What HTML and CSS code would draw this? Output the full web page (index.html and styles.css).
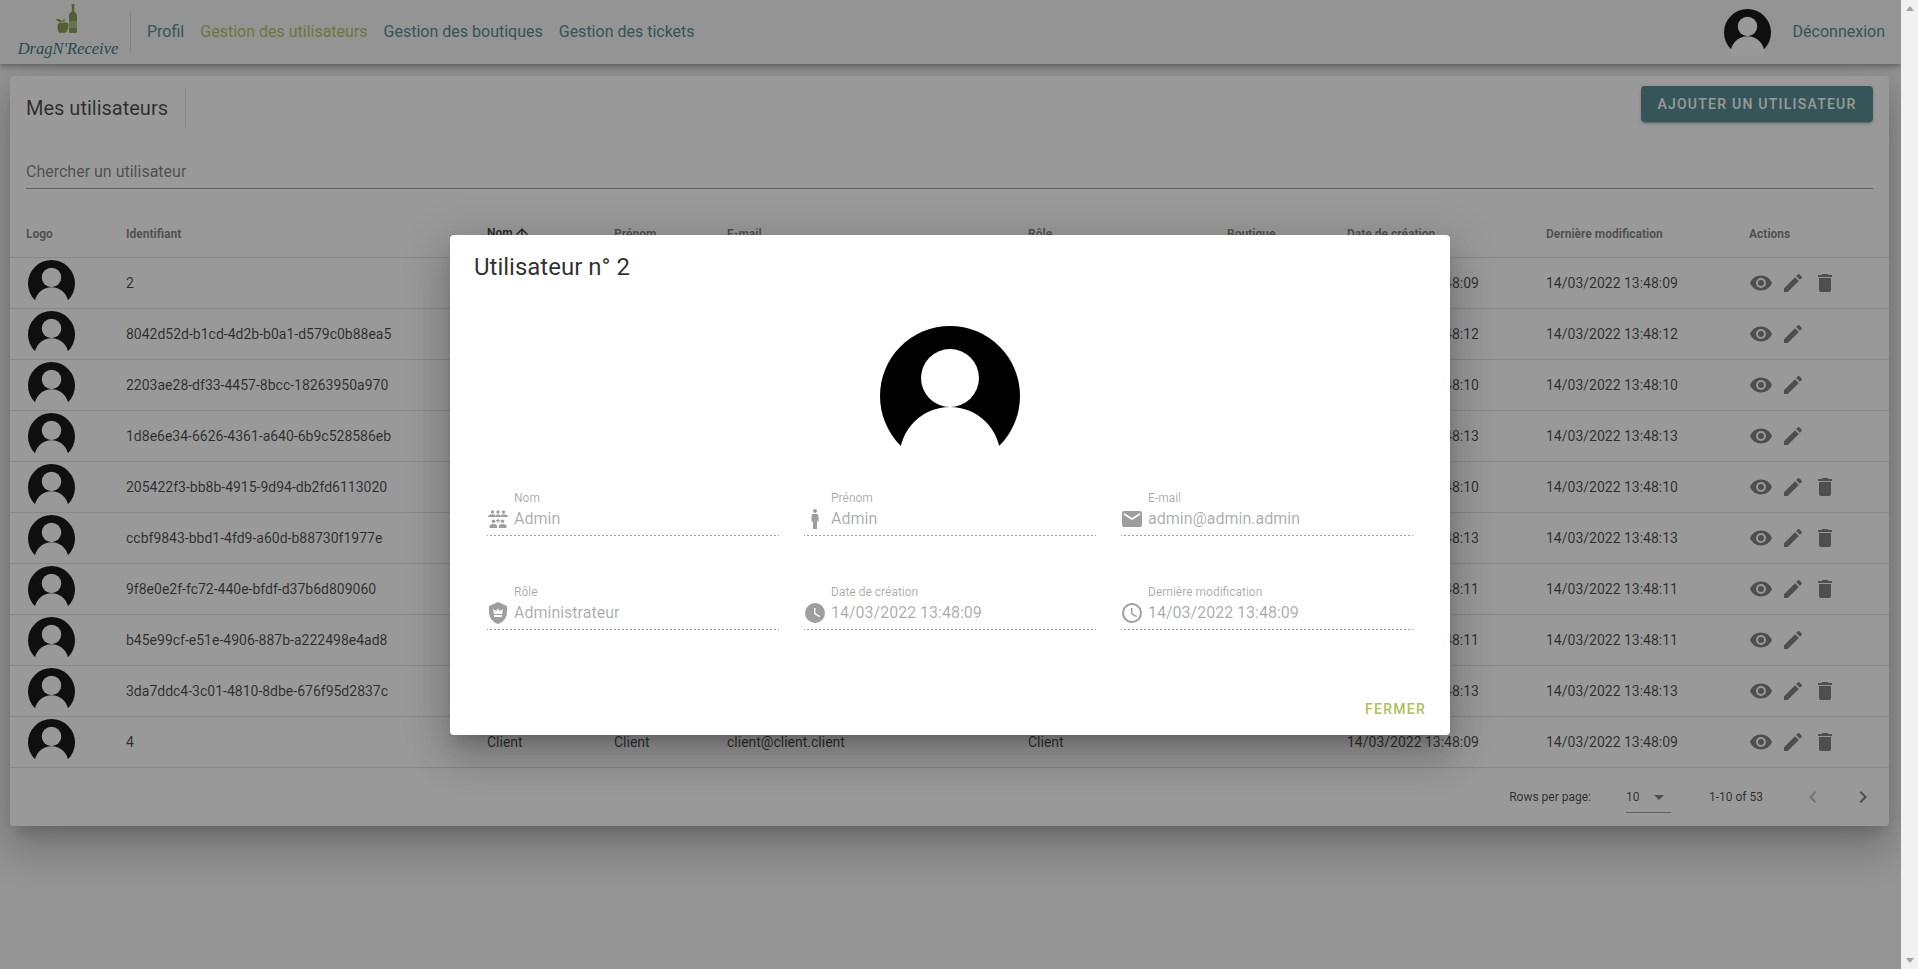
FILE: index.html
```html
<!DOCTYPE html>
<html lang="fr">
<head>
  <meta charset="UTF-8">
  <meta name="viewport" content="width=device-width, initial-scale=1.0">
  <title>DragN'Receive - Gestion des utilisateurs</title>
  <link rel="stylesheet" href="styles.css">
</head>
<body>

<!-- Icones -->
<svg class="sprites" xmlns="http://www.w3.org/2000/svg">
  <symbol id="i-avatar" viewBox="0 0 140 140">
    <circle cx="70" cy="70" r="70" fill="#000"/>
    <circle cx="70" cy="52" r="29" fill="#fff"/>
    <circle cx="70" cy="131.5" r="50.5" fill="#fff"/>
  </symbol>
  <symbol id="i-eye" viewBox="0 0 24 24"><path d="M12,9A3,3 0 0,0 9,12A3,3 0 0,0 12,15A3,3 0 0,0 15,12A3,3 0 0,0 12,9M12,17A5,5 0 0,1 7,12A5,5 0 0,1 12,7A5,5 0 0,1 17,12A5,5 0 0,1 12,17M12,4.5C7,4.5 2.73,7.61 1,12C2.73,16.39 7,19.5 12,19.5C17,19.5 21.27,16.39 23,12C21.27,7.61 17,4.5 12,4.5Z"/></symbol>
  <symbol id="i-pencil" viewBox="0 0 24 24"><path d="M20.71,7.04C21.1,6.65 21.1,6 20.71,5.63L18.37,3.29C18,2.9 17.35,2.9 16.96,3.29L15.12,5.12L18.87,8.87M3,17.25V21H6.75L17.81,9.93L14.06,6.18L3,17.25Z"/></symbol>
  <symbol id="i-delete" viewBox="0 0 24 24"><path d="M19,4H15.5L14.5,3H9.5L8.5,4H5V6H19M6,19A2,2 0 0,0 8,21H16A2,2 0 0,0 18,19V7H6V19Z"/></symbol>
  <symbol id="i-mail" viewBox="0 0 24 24"><path d="M20,8L12,13L4,8V6L12,11L20,6M20,4H4C2.89,4 2,4.89 2,6V18A2,2 0 0,0 4,20H20A2,2 0 0,0 22,18V6C22,4.89 21.1,4 20,4Z"/></symbol>
  <symbol id="i-clock" viewBox="0 0 24 24"><path d="M12,2A10,10 0 0,0 2,12A10,10 0 0,0 12,22A10,10 0 0,0 22,12A10,10 0 0,0 12,2M16.2,16.2L11,13V7H12.5V12.2L17,14.9L16.2,16.2Z"/></symbol>
  <symbol id="i-clock-outline" viewBox="0 0 24 24"><path d="M12,20A8,8 0 0,0 20,12A8,8 0 0,0 12,4A8,8 0 0,0 4,12A8,8 0 0,0 12,20M12,2A10,10 0 0,1 22,12A10,10 0 0,1 12,22C6.47,22 2,17.5 2,12A10,10 0 0,1 12,2M12.5,7V12.25L17,14.92L16.25,16.15L11,13V7H12.5Z"/></symbol>
  <symbol id="i-male" viewBox="0 0 24 24"><path d="M12,2A2,2 0 0,1 14,4A2,2 0 0,1 12,6A2,2 0 0,1 10,4A2,2 0 0,1 12,2M10.5,7H13.5A2,2 0 0,1 15.5,9V14.5H14V22H10V14.5H8.5V9A2,2 0 0,1 10.5,7Z"/></symbol>
  <symbol id="i-shield" viewBox="0 0 24 24"><path d="M12,1L3,5V11C3,16.55 6.84,21.74 12,23C17.16,21.74 21,16.55 21,11V5L12,1M16,16H8V14H16V16M16,13H8L7,8L10,10L12,7.5L14,10L17,8L16,13Z"/></symbol>
  <symbol id="i-crowd" viewBox="0 0 24 24">
    <circle cx="6.5" cy="5" r="1.7"/><circle cx="12" cy="5" r="1.7"/><circle cx="17.5" cy="5" r="1.7"/>
    <path d="M2,10C2,8 4,7.5 5.5,7.5H7.5C8.6,7.5 9.3,8 9.5,9C9.8,8 10.6,7.5 11.5,7.5H12.5C13.4,7.5 14.2,8 14.5,9C14.7,8 15.4,7.5 16.5,7.5H18.5C20,7.5 22,8 22,10Z"/>
    <circle cx="7.5" cy="14.2" r="1.8"/><circle cx="16.5" cy="14.2" r="1.8"/>
    <path d="M11.4,11.5H12.6V13H14V14.2H12.6V15.7H11.4V14.2H10V13H11.4Z"/>
    <path d="M3.5,21V19.5C3.5,17.8 5,17 7.5,17C10,17 11.2,17.8 11.2,19.5V21Z"/>
    <path d="M12.8,21V19.5C12.8,17.8 14,17 16.5,17C19,17 20.5,17.8 20.5,19.5V21Z"/>
  </symbol>
  <symbol id="i-sort" viewBox="0 0 24 24"><path d="M13,20H11V8L5.5,13.5L4.08,12.08L12,4.16L19.92,12.08L18.5,13.5L13,8V20Z"/></symbol>
  <symbol id="i-left" viewBox="0 0 24 24"><path d="M15.41,16.58L10.83,12L15.41,7.41L14,6L8,12L14,18L15.41,16.58Z"/></symbol>
  <symbol id="i-right" viewBox="0 0 24 24"><path d="M8.59,16.58L13.17,12L8.59,7.41L10,6L16,12L10,18L8.59,16.58Z"/></symbol>
  <symbol id="i-caret" viewBox="0 0 24 24"><path d="M7,10L12,15L17,10H7Z"/></symbol>
</svg>

<div class="window">
  <div class="stage">
    <div class="page">

      <!-- Barre du haut -->
      <header class="topbar">
        <a class="logo" href="#">
          <svg class="logo-mark" viewBox="0 0 21 29">
            <path d="M15.5,0H18.5V1.5H18.2V7.5C20,8.7 21,10 21,12V17H13V12C13,10 14,8.7 15.8,7.5V1.5H15.5Z"/>
            <path d="M13,23.5H21V27.5C21,28.4 20.4,29 19.5,29H14.5C13.6,29 13,28.4 13,27.5Z"/>
            <path class="logo-label" d="M13,17H21V23.5H13Z"/>
            <path d="M12.5,21C12.5,25.5 10.5,29 8,29C7.2,29 6.8,28.6 6.3,28.6C5.8,28.6 5.4,29 4.6,29C2.2,29 1.5,25 1.5,22.5C1.5,20 3,18.5 5,18.5C5.8,18.5 6,18.8 6.5,18.8C7.2,18.8 8.2,18.2 9.5,18.4C11.5,18.7 12.5,19.5 12.5,21Z"/>
            <path d="M0,15.5C1.5,14.5 4.5,14.5 6,17.8C3.5,18.5 1.2,17.5 0,15.5Z"/>
            <path d="M6,17.8C6.3,16.2 7.5,15 9.3,15.3C9,17 7.6,18 6,17.8Z"/>
          </svg>
          <span class="logo-text">DragN'Receive</span>
        </a>
        <span class="topbar-sep"></span>
        <nav class="nav">
          <a href="#">Profil</a>
          <a href="#" class="current">Gestion des utilisateurs</a>
          <a href="#">Gestion des boutiques</a>
          <a href="#">Gestion des tickets</a>
        </nav>
        <svg class="topbar-avatar"><use href="#i-avatar"/></svg>
        <a class="logout" href="#">Déconnexion</a>
      </header>

      <!-- Tableau des utilisateurs -->
      <main class="card">
        <div class="card-head">
          <h1>Mes utilisateurs</h1>
          <span class="card-sep"></span>
          <button class="btn-add">Ajouter un utilisateur</button>
        </div>

        <div class="search">
          <input type="text" placeholder="Chercher un utilisateur">
        </div>

        <table class="users">
          <colgroup>
            <col class="c-logo"><col class="c-id"><col class="c-nom"><col class="c-prenom"><col class="c-mail">
            <col class="c-role"><col class="c-shop"><col class="c-date"><col class="c-modif"><col class="c-act">
          </colgroup>
          <thead>
            <tr>
              <th>Logo</th>
              <th>Identifiant</th>
              <th class="sorted">Nom<svg class="sort-icon"><use href="#i-sort"/></svg></th>
              <th>Prénom</th>
              <th>E-mail</th>
              <th>Rôle</th>
              <th>Boutique</th>
              <th>Date de création</th>
              <th>Dernière modification</th>
              <th>Actions</th>
            </tr>
          </thead>
          <tbody>
            <tr>
              <td><svg class="row-avatar"><use href="#i-avatar"/></svg></td>
              <td>2</td><td></td><td></td><td></td><td></td><td></td>
              <td>14/03/2022 13:48:09</td><td>14/03/2022 13:48:09</td>
              <td class="actions"><svg><use href="#i-eye"/></svg><svg><use href="#i-pencil"/></svg><svg><use href="#i-delete"/></svg></td>
            </tr>
            <tr>
              <td><svg class="row-avatar"><use href="#i-avatar"/></svg></td>
              <td>8042d52d-b1cd-4d2b-b0a1-d579c0b88ea5</td><td></td><td></td><td></td><td></td><td></td>
              <td>14/03/2022 13:48:12</td><td>14/03/2022 13:48:12</td>
              <td class="actions"><svg><use href="#i-eye"/></svg><svg><use href="#i-pencil"/></svg></td>
            </tr>
            <tr>
              <td><svg class="row-avatar"><use href="#i-avatar"/></svg></td>
              <td>2203ae28-df33-4457-8bcc-18263950a970</td><td></td><td></td><td></td><td></td><td></td>
              <td>14/03/2022 13:48:10</td><td>14/03/2022 13:48:10</td>
              <td class="actions"><svg><use href="#i-eye"/></svg><svg><use href="#i-pencil"/></svg></td>
            </tr>
            <tr>
              <td><svg class="row-avatar"><use href="#i-avatar"/></svg></td>
              <td>1d8e6e34-6626-4361-a640-6b9c528586eb</td><td></td><td></td><td></td><td></td><td></td>
              <td>14/03/2022 13:48:13</td><td>14/03/2022 13:48:13</td>
              <td class="actions"><svg><use href="#i-eye"/></svg><svg><use href="#i-pencil"/></svg></td>
            </tr>
            <tr>
              <td><svg class="row-avatar"><use href="#i-avatar"/></svg></td>
              <td>205422f3-bb8b-4915-9d94-db2fd6113020</td><td></td><td></td><td></td><td></td><td></td>
              <td>14/03/2022 13:48:10</td><td>14/03/2022 13:48:10</td>
              <td class="actions"><svg><use href="#i-eye"/></svg><svg><use href="#i-pencil"/></svg><svg><use href="#i-delete"/></svg></td>
            </tr>
            <tr>
              <td><svg class="row-avatar"><use href="#i-avatar"/></svg></td>
              <td>ccbf9843-bbd1-4fd9-a60d-b88730f1977e</td><td></td><td></td><td></td><td></td><td></td>
              <td>14/03/2022 13:48:13</td><td>14/03/2022 13:48:13</td>
              <td class="actions"><svg><use href="#i-eye"/></svg><svg><use href="#i-pencil"/></svg><svg><use href="#i-delete"/></svg></td>
            </tr>
            <tr>
              <td><svg class="row-avatar"><use href="#i-avatar"/></svg></td>
              <td>9f8e0e2f-fc72-440e-bfdf-d37b6d809060</td><td></td><td></td><td></td><td></td><td></td>
              <td>14/03/2022 13:48:11</td><td>14/03/2022 13:48:11</td>
              <td class="actions"><svg><use href="#i-eye"/></svg><svg><use href="#i-pencil"/></svg><svg><use href="#i-delete"/></svg></td>
            </tr>
            <tr>
              <td><svg class="row-avatar"><use href="#i-avatar"/></svg></td>
              <td>b45e99cf-e51e-4906-887b-a222498e4ad8</td><td></td><td></td><td></td><td></td><td></td>
              <td>14/03/2022 13:48:11</td><td>14/03/2022 13:48:11</td>
              <td class="actions"><svg><use href="#i-eye"/></svg><svg><use href="#i-pencil"/></svg></td>
            </tr>
            <tr>
              <td><svg class="row-avatar"><use href="#i-avatar"/></svg></td>
              <td>3da7ddc4-3c01-4810-8dbe-676f95d2837c</td><td></td><td></td><td></td><td></td><td></td>
              <td>14/03/2022 13:48:13</td><td>14/03/2022 13:48:13</td>
              <td class="actions"><svg><use href="#i-eye"/></svg><svg><use href="#i-pencil"/></svg><svg><use href="#i-delete"/></svg></td>
            </tr>
            <tr>
              <td><svg class="row-avatar"><use href="#i-avatar"/></svg></td>
              <td>4</td><td>Client</td><td>Client</td><td>client@client.client</td><td>Client</td><td></td>
              <td>14/03/2022 13:48:09</td><td>14/03/2022 13:48:09</td>
              <td class="actions"><svg><use href="#i-eye"/></svg><svg><use href="#i-pencil"/></svg><svg><use href="#i-delete"/></svg></td>
            </tr>
          </tbody>
        </table>

        <div class="table-foot">
          <span class="rows-label">Rows per page:</span>
          <span class="rows-select">10<svg><use href="#i-caret"/></svg></span>
          <span class="rows-range">1-10 of 53</span>
          <svg class="page-btn off"><use href="#i-left"/></svg>
          <svg class="page-btn"><use href="#i-right"/></svg>
        </div>
      </main>
    </div>

    <!-- Fenetre de detail -->
    <div class="overlay"></div>
    <div class="dialog-wrap">
      <section class="dialog">
        <h2>Utilisateur n° 2</h2>
        <svg class="dialog-avatar"><use href="#i-avatar"/></svg>
        <div class="fields">
          <div class="field">
            <label>Nom</label>
            <div class="field-row"><svg><use href="#i-crowd"/></svg><span>Admin</span></div>
          </div>
          <div class="field">
            <label>Prénom</label>
            <div class="field-row"><svg><use href="#i-male"/></svg><span>Admin</span></div>
          </div>
          <div class="field">
            <label>E-mail</label>
            <div class="field-row"><svg><use href="#i-mail"/></svg><span>admin@admin.admin</span></div>
          </div>
          <div class="field">
            <label>Rôle</label>
            <div class="field-row"><svg><use href="#i-shield"/></svg><span>Administrateur</span></div>
          </div>
          <div class="field">
            <label>Date de création</label>
            <div class="field-row"><svg><use href="#i-clock"/></svg><span>14/03/2022 13:48:09</span></div>
          </div>
          <div class="field">
            <label>Dernière modification</label>
            <div class="field-row"><svg><use href="#i-clock-outline"/></svg><span>14/03/2022 13:48:09</span></div>
          </div>
        </div>
        <div class="dialog-actions">
          <button class="btn-close">Fermer</button>
        </div>
      </section>
    </div>
  </div>

  <!-- Barre de defilement -->
  <div class="scrollbar">
    <span class="arrow-up"></span>
    <span class="arrow-down"></span>
  </div>
</div>

</body>
</html>
```

FILE: styles.css
```css
* {
  box-sizing: border-box;
}

html, body {
  margin: 0;
  height: 100%;
  overflow: hidden;
}

body {
  font-family: Roboto, "Liberation Sans", sans-serif;
  color: rgba(0, 0, 0, 0.87);
}

.sprites {
  display: none;
}

a {
  text-decoration: none;
}

.window {
  display: flex;
  height: 969px;
}

.stage {
  position: relative;
  flex: 1;
  overflow: hidden;
}

.page {
  height: 100%;
  background: #f5f5f5;
}

/* Barre du haut */
.topbar {
  display: flex;
  align-items: center;
  height: 64px;
  padding-right: 16px;
  background: #f5f5f5;
  box-shadow: 0 2px 4px -1px rgba(0, 0, 0, 0.2), 0 4px 5px 0 rgba(0, 0, 0, 0.14), 0 1px 10px 0 rgba(0, 0, 0, 0.12);
  position: relative;
}

.logo {
  display: flex;
  flex-direction: column;
  align-items: center;
  width: 104px;
  height: 64px;
  margin-left: 16px;
  padding-top: 4px;
}

.logo-mark {
  flex: none;
  width: 21px;
  height: 29px;
  margin-right: 3px;
  fill: #80923f;
}

.logo-label {
  fill: #a9b57c;
}

.logo-text {
  margin-top: 6px;
  font-family: "Liberation Serif", serif;
  font-style: italic;
  font-size: 16.5px;
  line-height: 20px;
  color: #2f6e75;
  white-space: nowrap;
}

.topbar-sep {
  width: 1px;
  height: 40px;
  margin: 0 16px 0 10px;
  background: rgba(0, 0, 0, 0.12);
}

.nav {
  display: flex;
  gap: 16px;
  flex: 1;
  margin-top: -2px;
  font-size: 16px;
}

.nav a {
  color: #468287;
}

.nav a.current {
  color: #afbe5c;
}

.topbar-avatar {
  width: 47px;
  height: 47px;
}

.logout {
  margin-left: 22px;
  margin-top: -2px;
  font-size: 16px;
  color: #468287;
}

/* Carte */
.card {
  height: 750px;
  margin: 12px 12px 0 10px;
  background: #fff;
  border-radius: 4px;
  box-shadow: 0 11px 15px -7px rgba(0, 0, 0, 0.2), 0 24px 38px 3px rgba(0, 0, 0, 0.14), 0 9px 46px 8px rgba(0, 0, 0, 0.12);
}

.card-head {
  display: flex;
  align-items: center;
  height: 64px;
  padding: 0 16px;
}

.card-head h1 {
  margin: 0;
  font-size: 20px;
  font-weight: 400;
  color: rgba(0, 0, 0, 0.78);
}

.card-sep {
  width: 1px;
  height: 40px;
  margin-left: 17px;
  background: rgba(0, 0, 0, 0.12);
}

.btn-add {
  align-self: flex-start;
  width: 232px;
  height: 36px;
  margin: 10px 0 0 auto;
  padding: 0;
  border: none;
  border-radius: 4px;
  background: #468287;
  color: #fff;
  font-family: inherit;
  font-size: 14px;
  font-weight: 500;
  letter-spacing: 0.0892857em;
  text-transform: uppercase;
  box-shadow: 0 3px 1px -2px rgba(0, 0, 0, 0.2), 0 2px 2px 0 rgba(0, 0, 0, 0.14), 0 1px 5px 0 rgba(0, 0, 0, 0.12);
}

.search {
  margin: 0 16px;
  padding: 19px 0 5px;
  border-bottom: 1px solid rgba(0, 0, 0, 0.42);
}

.search input {
  display: block;
  width: 100%;
  height: 24px;
  padding: 0;
  border: none;
  outline: none;
  background: none;
  font-family: inherit;
  font-size: 16px;
}

.search input::placeholder {
  color: rgba(0, 0, 0, 0.55);
  opacity: 1;
}

/* Tableau */
.users {
  width: 100%;
  margin-top: 20px;
  table-layout: fixed;
  border-collapse: separate;
  border-spacing: 0;
  font-size: 14px;
}

.c-logo { width: 100px; }
.c-id { width: 361px; }
.c-nom { width: 127px; }
.c-prenom { width: 113px; }
.c-mail { width: 301px; }
.c-role { width: 199px; }
.c-shop { width: 120px; }
.c-date { width: 199px; }
.c-modif { width: 203px; }
.c-act { width: 156px; }

.users th {
  height: 49px;
  padding: 2px 16px 0;
  border-bottom: 1px solid rgba(0, 0, 0, 0.12);
  font-size: 12px;
  font-weight: 700;
  color: rgba(0, 0, 0, 0.55);
  text-align: left;
  white-space: nowrap;
}

.users th.sorted {
  color: rgba(0, 0, 0, 0.78);
}

.sort-icon {
  width: 18px;
  height: 18px;
  vertical-align: middle;
  fill: rgba(0, 0, 0, 0.78);
}

.users td {
  height: 51px;
  padding: 0 16px;
  border-bottom: 1px solid rgba(0, 0, 0, 0.12);
  color: rgba(0, 0, 0, 0.78);
  white-space: nowrap;
}

.row-avatar {
  display: block;
  width: 47px;
  height: 47px;
  margin-left: 1.5px;
}

.actions svg {
  width: 24px;
  height: 24px;
  margin-right: 8px;
  vertical-align: middle;
  fill: rgba(0, 0, 0, 0.54);
}

.table-foot {
  display: flex;
  align-items: center;
  justify-content: flex-end;
  height: 58px;
  padding-right: 14px;
  font-size: 12px;
  color: rgba(0, 0, 0, 0.78);
}

.rows-select {
  display: flex;
  align-items: center;
  justify-content: space-between;
  width: 45px;
  height: 32px;
  margin-left: 35px;
  border-bottom: 1px solid rgba(0, 0, 0, 0.42);
}

.rows-select svg {
  width: 24px;
  height: 24px;
  fill: rgba(0, 0, 0, 0.54);
}

.rows-range {
  margin: 0 38px;
}

.page-btn {
  width: 24px;
  height: 24px;
  fill: rgba(0, 0, 0, 0.54);
}

.page-btn.off {
  margin-right: 26px;
  fill: rgba(0, 0, 0, 0.26);
}

/* Fenetre de detail */
.overlay {
  position: absolute;
  inset: 0;
  background: #212121;
  opacity: 0.46;
}

.dialog-wrap {
  position: absolute;
  inset: 0;
  display: flex;
  align-items: center;
  justify-content: center;
  padding-right: 1px;
}

.dialog {
  display: flex;
  flex-direction: column;
  width: 1000px;
  height: 500px;
  background: #fff;
  border-radius: 4px;
  box-shadow: 0 11px 15px -7px rgba(0, 0, 0, 0.2), 0 24px 38px 3px rgba(0, 0, 0, 0.14), 0 9px 46px 8px rgba(0, 0, 0, 0.12);
}

.dialog h2 {
  margin: 0;
  padding: 16px 24px 10px;
  font-size: 24px;
  font-weight: 400;
  line-height: 32px;
  color: rgba(0, 0, 0, 0.82);
}

.dialog-avatar {
  flex: none;
  width: 140px;
  height: 140px;
  margin: 33px auto 24px;
}

.fields {
  display: grid;
  grid-template-columns: repeat(3, 1fr);
  column-gap: 24px;
  row-gap: 48px;
  padding: 0 37px 0 36px;
}

.field {
  height: 46px;
  border-bottom: 1px solid;
  border-image: repeating-linear-gradient(90deg, rgba(0, 0, 0, 0.38) 0, rgba(0, 0, 0, 0.38) 2px, transparent 0, transparent 4px) 1 repeat;
  color: rgba(0, 0, 0, 0.34);
}

.field label {
  display: block;
  margin-left: 28px;
  font-size: 12px;
  line-height: 16px;
}

.field-row {
  display: flex;
  align-items: center;
  gap: 4px;
  height: 24px;
  margin-top: 1px;
  font-size: 16px;
}

.field-row svg {
  flex: none;
  width: 24px;
  height: 24px;
  fill: rgba(0, 0, 0, 0.38);
}

.dialog-actions {
  display: flex;
  justify-content: flex-end;
  margin-top: auto;
  padding: 8px;
}

.btn-close {
  height: 36px;
  padding: 0 16px;
  border: none;
  background: none;
  color: #afbe5c;
  font-family: inherit;
  font-size: 14px;
  font-weight: 500;
  letter-spacing: 0.0892857em;
  text-transform: uppercase;
}

/* Barre de defilement */
.scrollbar {
  display: flex;
  flex-direction: column;
  justify-content: space-between;
  align-items: center;
  width: 17px;
  padding: 6px 0;
  background: #f1f1f1;
}

.arrow-up, .arrow-down {
  width: 0;
  height: 0;
  border-left: 4.5px solid transparent;
  border-right: 4.5px solid transparent;
}

.arrow-up {
  border-bottom: 5px solid #a3a3a3;
}

.arrow-down {
  border-top: 5px solid #a3a3a3;
}
```
